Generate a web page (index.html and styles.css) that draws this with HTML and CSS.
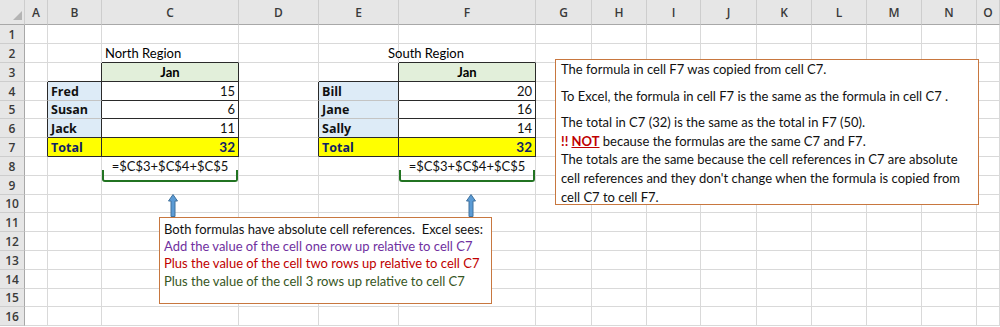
FILE: index.html
```html
<!DOCTYPE html>
<html lang="en">
<head>
  <meta charset="UTF-8" />
  <title>Absolute References</title>
  <link rel="stylesheet" href="styles.css">
</head>
<body>

  <div class="sheet">
    <table class="grid">
      <colgroup>
        <col class="c-head"><col class="c-a"><col class="c-b"><col class="c-c"><col class="c-d"><col class="c-e"><col class="c-f">
        <col class="c-g"><col class="c-h"><col class="c-i"><col class="c-j"><col class="c-k"><col class="c-l"><col class="c-m"><col class="c-n"><col class="c-o">
      </colgroup>
      <thead>
        <tr>
          <th class="corner"><span class="tri"></span></th>
          <th>A</th><th>B</th><th>C</th><th>D</th><th>E</th><th>F</th><th>G</th><th>H</th><th>I</th><th>J</th><th>K</th><th>L</th><th>M</th><th>N</th><th>O</th>
        </tr>
      </thead>
      <tbody>
        <tr>
          <th>1</th>
          <td></td><td></td><td></td><td></td><td></td><td></td><td></td><td></td><td></td><td></td><td></td><td></td><td></td><td></td><td></td>
        </tr>
        <tr>
          <th>2</th>
          <td></td><td></td><td class="title bb">North Region</td><td></td><td class="title south">South Region</td><td class="bb"></td><td></td><td></td><td></td><td></td><td></td><td></td><td></td><td></td><td></td>
        </tr>
        <tr>
          <th>3</th>
          <td></td><td class="br bb"></td><td class="month br bb">Jan</td><td></td><td class="br bb"></td><td class="month br bb">Jan</td><td></td><td></td><td></td><td></td><td></td><td></td><td></td><td></td><td></td>
        </tr>
        <tr>
          <th>4</th>
          <td class="br"></td><td class="name br bl">Fred</td><td class="num br bb">15</td><td class="br"></td><td class="name br bl">Bill</td><td class="num br bb">20</td><td></td><td></td><td></td><td></td><td></td><td></td><td></td><td></td><td></td>
        </tr>
        <tr class="short">
          <th>5</th>
          <td class="br"></td><td class="name br bl">Susan</td><td class="num br bb">6</td><td class="br"></td><td class="name br bl">Jane</td><td class="num br bb">16</td><td></td><td></td><td></td><td></td><td></td><td></td><td></td><td></td><td></td>
        </tr>
        <tr>
          <th>6</th>
          <td class="br"></td><td class="name br bb">Jack</td><td class="num br bb">11</td><td class="br"></td><td class="name br bb">Sally</td><td class="num br bb">14</td><td></td><td></td><td></td><td></td><td></td><td></td><td></td><td></td><td></td>
        </tr>
        <tr>
          <th>7</th>
          <td class="br"></td><td class="total br bb">Total</td><td class="total num br bb">32</td><td class="br"></td><td class="total br bb">Total</td><td class="total num br bb">32</td><td></td><td></td><td></td><td></td><td></td><td></td><td></td><td></td><td></td>
        </tr>
        <tr>
          <th>8</th>
          <td></td><td></td><td class="formula">=$C$3+$C$4+$C$5</td><td></td><td></td><td class="formula">=$C$3+$C$4+$C$5</td><td></td><td></td><td></td><td></td><td></td><td></td><td></td><td></td><td></td>
        </tr>
        <tr>
          <th>9</th>
          <td></td><td></td><td></td><td></td><td></td><td></td><td></td><td></td><td></td><td></td><td></td><td></td><td></td><td></td><td></td>
        </tr>
        <tr class="short">
          <th>10</th>
          <td></td><td></td><td></td><td></td><td></td><td></td><td></td><td></td><td></td><td></td><td></td><td></td><td></td><td></td><td></td>
        </tr>
        <tr>
          <th>11</th>
          <td></td><td></td><td></td><td></td><td></td><td></td><td></td><td></td><td></td><td></td><td></td><td></td><td></td><td></td><td></td>
        </tr>
        <tr>
          <th>12</th>
          <td></td><td></td><td></td><td></td><td></td><td></td><td></td><td></td><td></td><td></td><td></td><td></td><td></td><td></td><td></td>
        </tr>
        <tr>
          <th>13</th>
          <td></td><td></td><td></td><td></td><td></td><td></td><td></td><td></td><td></td><td></td><td></td><td></td><td></td><td></td><td></td>
        </tr>
        <tr>
          <th>14</th>
          <td></td><td></td><td></td><td></td><td></td><td></td><td></td><td></td><td></td><td></td><td></td><td></td><td></td><td></td><td></td>
        </tr>
        <tr class="short">
          <th>15</th>
          <td></td><td></td><td></td><td></td><td></td><td></td><td></td><td></td><td></td><td></td><td></td><td></td><td></td><td></td><td></td>
        </tr>
        <tr>
          <th>16</th>
          <td></td><td></td><td></td><td></td><td></td><td></td><td></td><td></td><td></td><td></td><td></td><td></td><td></td><td></td><td></td>
        </tr>
      </tbody>
    </table>

    <!-- shapes floating over the sheet -->
    <div class="brace brace-north"></div>
    <div class="brace brace-south"></div>

    <svg class="arrow arrow-north" width="10" height="23" viewBox="0 0 10 23">
      <path d="M5 0.5 L9.5 7 L7 7 L7 22.5 L3 22.5 L3 7 L0.5 7 Z" fill="#5b9bd5" stroke="#41719c" stroke-width="1"/>
    </svg>
    <svg class="arrow arrow-south" width="10" height="23" viewBox="0 0 10 23">
      <path d="M5 0.5 L9.5 7 L7 7 L7 22.5 L3 22.5 L3 7 L0.5 7 Z" fill="#5b9bd5" stroke="#41719c" stroke-width="1"/>
    </svg>

    <div class="note note-explain">
      <p class="gap">The formula in cell F7 was copied from cell C7.</p>
      <p class="gap">To Excel, the formula in cell F7 is the same as the formula in cell C7 .</p>
      <p>The total in C7 (32) is the same as the total in F7 (50).</p>
      <p><span class="warn">!! <u>NOT</u></span> because the formulas are the same C7 and F7.</p>
      <p>The totals are the same because the cell references in C7 are absolute<br>cell references and they don't change when the formula is copied from<br>cell C7 to cell F7.</p>
    </div>

    <div class="note note-sees">
      <p>Both formulas have absolute cell references.&nbsp; Excel sees:</p>
      <p class="purple">Add the value of the cell one row up relative to cell C7</p>
      <p class="red">Plus the value of the cell two rows up relative to cell C7</p>
      <p class="green">Plus the value of the cell 3 rows up relative to cell C7</p>
    </div>
  </div>

</body>
</html>
```

FILE: styles.css
```css
body {
  margin: 0;
  background: #fff;
  font-family: Lato, "Liberation Sans", sans-serif;
  color: #000;
}

.sheet {
  position: relative;
  width: 1000px;
  height: 327px;
  overflow: hidden;
}

.grid {
  border-collapse: separate;
  border-spacing: 0;
  table-layout: fixed;
  width: 1000px;
}

.c-head { width: 25px; }
.c-a { width: 23px; }
.c-b { width: 54px; }
.c-c { width: 137px; }
.c-d { width: 80px; }
.c-e { width: 80px; }
.c-f { width: 137px; }
.c-g { width: 56px; }
.c-h { width: 55px; }
.c-i { width: 54px; }
.c-j { width: 56px; }
.c-k { width: 55px; }
.c-l { width: 55px; }
.c-m { width: 55px; }
.c-n { width: 55px; }
.c-o { width: 23px; }

.grid td,
.grid th {
  box-sizing: border-box;
  height: 19px;
  padding: 0 3px;
  border-right: 1px solid #d9d9d9;
  border-bottom: 1px solid #d9d9d9;
  white-space: nowrap;
  overflow: visible;
  font-size: 13px;
  line-height: 17px;
}

.grid tr.short td,
.grid tr.short th {
  height: 18px;
}

/* headers */
.grid thead th {
  height: 25px;
  background: #e6e6e6;
  border-right: 1px solid #cdcdcd;
  border-bottom: 1px solid #a8a8a8;
  font-family: "Open Sans", sans-serif;
  font-size: 12px;
  font-weight: 600;
  color: #3a3a3a;
  text-align: center;
  padding: 0;
}

.grid tbody th {
  background: #e6e6e6;
  border-right: 1px solid #a8a8a8;
  border-bottom: 1px solid #cdcdcd;
  font-family: "Open Sans", sans-serif;
  font-size: 12px;
  font-weight: 600;
  color: #3a3a3a;
  text-align: center;
  padding: 0;
}

.grid thead th.corner {
  position: relative;
}

.tri {
  position: absolute;
  right: 2px;
  bottom: 4px;
  width: 0;
  height: 0;
  border-left: 9px solid transparent;
  border-bottom: 9px solid #b4b4b4;
}

/* cell borders */
.grid td.br { border-right-color: #2a2a2a; }
.grid td.bb { border-bottom-color: #2a2a2a; }
.grid td.bl { border-bottom-color: #c4c4c4; }

.title.south {
  padding-left: 69px;
}

.month {
  background: #e2efda;
  font-weight: bold;
  text-align: center;
}

.name {
  background: #ddebf7;
  font-family: "Open Sans", sans-serif;
  font-weight: bold;
  color: #111;
}

.grid td.name {
  font-size: 12.5px;
}

.num {
  text-align: right;
  color: #111;
}

.grid td.total {
  background: #ffff00;
  font-family: "Open Sans", sans-serif;
  font-weight: bold;
  font-size: 12.5px;
  color: #0e2167;
}

.grid td.total.num {
  font-family: Lato, sans-serif;
  font-size: 13.5px;
}

.formula {
  text-align: center;
  color: #111;
}

/* braces under the formulas */
.brace {
  position: absolute;
  top: 170px;
  width: 136px;
  height: 12px;
  border: 2px solid #217321;
  border-top: none;
  border-radius: 0 0 3px 3px;
  box-sizing: border-box;
}

.brace-north { left: 102px; }
.brace-south { left: 399px; }

.arrow {
  position: absolute;
  top: 194px;
}

.arrow-north { left: 168px; }
.arrow-south { left: 466px; }

/* text boxes */
.note {
  position: absolute;
  box-sizing: border-box;
  background: #fff;
  border: 1px solid #c8773f;
  color: #111;
  font-size: 13px;
  white-space: nowrap;
}

.note p {
  margin: 0;
}

.note-explain {
  left: 555px;
  top: 59px;
  width: 424px;
  height: 146px;
  padding: 0 5px;
  line-height: 18.6px;
}

.note-explain p.gap {
  margin-bottom: 8px;
}

.warn {
  color: #c00000;
  font-weight: bold;
}

.note-sees {
  left: 159px;
  top: 217px;
  width: 333px;
  height: 87px;
  padding: 3px 4px;
  line-height: 17.2px;
}

.purple { color: #7030a0; }
.red { color: #c00000; }
.green { color: #375623; }
```
